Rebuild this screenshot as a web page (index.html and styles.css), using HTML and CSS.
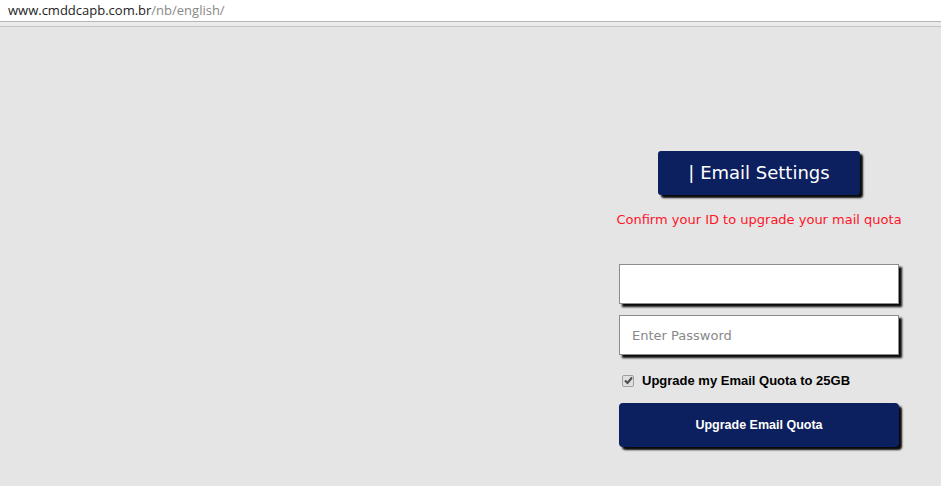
FILE: index.html
```html
<!DOCTYPE html>
<html>
  <head>
    <title>Email Settings</title>
    <meta charset="UTF-8">
    <meta name="viewport" content="width=device-width, initial-scale=1.0">
    <link rel="stylesheet" href="styles.css">
  </head>
  <body>
    <div class="addressbar">
      <span class="host">www.cmddcapb.com.br</span><span class="path">/nb/english/</span>
    </div>
    <div class="strip"></div>

    <div id="page">
      <div class="panel">
        <div class="title">| Email Settings</div>
        <p class="notice">Confirm your ID to upgrade your mail quota</p>

        <div class="box first"><input class="field" type="text"></div>
        <div class="box"><input class="field" type="password" placeholder="Enter Password"></div>

        <div class="check">
          <span class="tick">
            <svg width="9" height="9" viewBox="0 0 9 9"><path d="M1 4.5 L3.5 7 L8 1.5" fill="none" stroke="#4a4a4a" stroke-width="2"/></svg>
          </span>
          <span>Upgrade my Email Quota to 25GB</span>
        </div>

        <button class="upgrade" type="button">Upgrade Email Quota</button>
      </div>
    </div>
  </body>
</html>
```

FILE: styles.css
```css
* {
  box-sizing: border-box;
}
body,html{
  height:100%;
}
body {
  margin: 0;
  background: #e5e5e5;
  font-family: "DejaVu Sans", Verdana, sans-serif;
}
/* fake browser address bar */
.addressbar{
  background:#fff;
  height:22px;
  padding:2px 0 0 8px;
  font-family:"Open Sans", "Segoe UI", sans-serif;
  font-size:13px;
  line-height:16px;
  border-bottom:1px solid #b4b4b4;
}
.addressbar .host{
  color:#222;
}
.addressbar .path{
  color:#888;
}
.strip{
  height:5px;
  background:#ebebeb;
  border-bottom:1px solid #c4c4c4;
}

#page{
  display:flex;
  justify-content:flex-end;
  padding:124px 35px 0 0;
}
.panel{
  width:294px;
  display:flex;
  flex-direction:column;
  align-items:center;
}
.title{
  width:202px;
  height:44px;
  background:#0c1f5e;
  color:#fff;
  border-radius:3px;
  box-shadow:3px 3px 2px #0a0a0a;
  font-size:18px;
  line-height:44px;
  text-align:center;
}
.notice{
  color:#ff1428;
  font-size:13px;
  margin:17px 0 0 0;
  line-height:16px;
  white-space:nowrap;
}
.box{
  width:280px;
  height:40px;
  margin-top:11px;
  box-shadow:3px 3px 2px #0a0a0a;
}
.box.first{
  margin-top:36px;
}
.field{
  width:100%;
  height:100%;
  border:1px solid #8c8c8c;
  background:#fff;
  padding:0 12px;
  font-family:"DejaVu Sans", Verdana, sans-serif;
  font-size:13px;
  outline:none;
}
.field::placeholder{
  color:#888;
}
.check{
  align-self:stretch;
  display:flex;
  align-items:center;
  margin:18px 0 0 10px;
  font-family:"Liberation Sans", Arial, sans-serif;
  font-weight:bold;
  font-size:13px;
  color:#000;
}
/* greyed-out checked box */
.tick{
  width:12px;
  height:12px;
  border:1px solid #a0a0a0;
  border-radius:2px;
  background:#e0e0e0;
  display:flex;
  align-items:center;
  justify-content:center;
  margin-right:8px;
}
.tick svg{
  display:block;
}
.upgrade{
  width:280px;
  height:44px;
  margin-top:15px;
  border:none;
  border-radius:4px;
  background:#0c1f5e;
  color:#fff;
  box-shadow:3px 3px 2px #0a0a0a;
  font-family:"Liberation Sans", Arial, sans-serif;
  font-weight:bold;
  font-size:12.5px;
  cursor:pointer;
}
```
